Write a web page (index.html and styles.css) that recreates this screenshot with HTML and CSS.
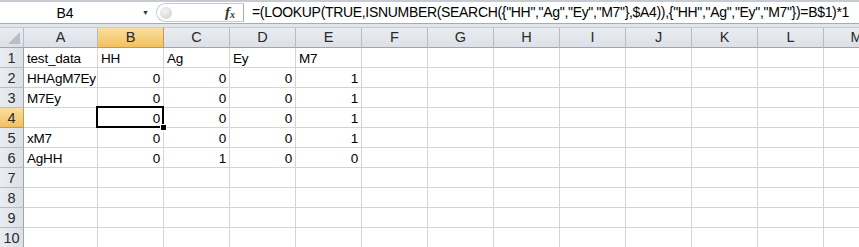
FILE: index.html
```html
<!DOCTYPE html>
<html lang="en">
<head>
  <meta charset="UTF-8" />
  <title>Book1</title>
  <link rel="stylesheet" href="styles.css">
</head>
<body>
  <div class="formula-bar">
    <div class="name-box">
      <span class="cell-ref">B4</span>
      <span class="drop">&#9660;</span>
    </div>
    <div class="fx-box">
      <span class="knob"></span>
      <span class="fx">f<sub>x</sub></span>
    </div>
    <div class="formula">=(LOOKUP(TRUE,ISNUMBER(SEARCH({"HH","Ag","Ey","M7"},$A4)),{"HH","Ag","Ey","M7"})=B$1)*1</div>
  </div>
  <div class="strip"></div>

  <div class="sheet">
    <div class="hd corner"><span class="tri"></span></div>
    <div class="hd">A</div>
    <div class="hd active">B</div>
    <div class="hd">C</div>
    <div class="hd">D</div>
    <div class="hd">E</div>
    <div class="hd">F</div>
    <div class="hd">G</div>
    <div class="hd">H</div>
    <div class="hd">I</div>
    <div class="hd">J</div>
    <div class="hd">K</div>
    <div class="hd">L</div>
    <div class="hd">M</div>

    <div class="rh">1</div>
    <div class="c">test_data</div><div class="c">HH</div><div class="c">Ag</div><div class="c">Ey</div><div class="c">M7</div>
    <div class="c"></div><div class="c"></div><div class="c"></div><div class="c"></div><div class="c"></div><div class="c"></div><div class="c"></div><div class="c"></div>

    <div class="rh">2</div>
    <div class="c">HHAgM7Ey</div><div class="c n">0</div><div class="c n">0</div><div class="c n">0</div><div class="c n">1</div>
    <div class="c"></div><div class="c"></div><div class="c"></div><div class="c"></div><div class="c"></div><div class="c"></div><div class="c"></div><div class="c"></div>

    <div class="rh">3</div>
    <div class="c">M7Ey</div><div class="c n">0</div><div class="c n">0</div><div class="c n">0</div><div class="c n">1</div>
    <div class="c"></div><div class="c"></div><div class="c"></div><div class="c"></div><div class="c"></div><div class="c"></div><div class="c"></div><div class="c"></div>

    <div class="rh active">4</div>
    <div class="c"></div><div class="c n sel">0<span class="handle"></span></div><div class="c n">0</div><div class="c n">0</div><div class="c n">1</div>
    <div class="c"></div><div class="c"></div><div class="c"></div><div class="c"></div><div class="c"></div><div class="c"></div><div class="c"></div><div class="c"></div>

    <div class="rh">5</div>
    <div class="c">xM7</div><div class="c n">0</div><div class="c n">0</div><div class="c n">0</div><div class="c n">1</div>
    <div class="c"></div><div class="c"></div><div class="c"></div><div class="c"></div><div class="c"></div><div class="c"></div><div class="c"></div><div class="c"></div>

    <div class="rh">6</div>
    <div class="c">AgHH</div><div class="c n">0</div><div class="c n">1</div><div class="c n">0</div><div class="c n">0</div>
    <div class="c"></div><div class="c"></div><div class="c"></div><div class="c"></div><div class="c"></div><div class="c"></div><div class="c"></div><div class="c"></div>

    <div class="rh">7</div>
    <div class="c"></div><div class="c"></div><div class="c"></div><div class="c"></div><div class="c"></div><div class="c"></div><div class="c"></div><div class="c"></div><div class="c"></div><div class="c"></div><div class="c"></div><div class="c"></div><div class="c"></div>

    <div class="rh">8</div>
    <div class="c"></div><div class="c"></div><div class="c"></div><div class="c"></div><div class="c"></div><div class="c"></div><div class="c"></div><div class="c"></div><div class="c"></div><div class="c"></div><div class="c"></div><div class="c"></div><div class="c"></div>

    <div class="rh">9</div>
    <div class="c"></div><div class="c"></div><div class="c"></div><div class="c"></div><div class="c"></div><div class="c"></div><div class="c"></div><div class="c"></div><div class="c"></div><div class="c"></div><div class="c"></div><div class="c"></div><div class="c"></div>

    <div class="rh">10</div>
    <div class="c"></div><div class="c"></div><div class="c"></div><div class="c"></div><div class="c"></div><div class="c"></div><div class="c"></div><div class="c"></div><div class="c"></div><div class="c"></div><div class="c"></div><div class="c"></div><div class="c"></div>
  </div>
</body>
</html>
```

FILE: styles.css
```css
body {
  margin: 0;
  width: 859px;
  height: 247px;
  overflow: hidden;
  background: white;
  font-family: "Liberation Sans", Arial, sans-serif;
  font-size: 14px;
  color: #000;
}
.formula-bar {
  display: flex;
  height: 21px;
  border-top: 2px solid #c4cbd5;
  border-bottom: 1px solid #a5acb5;
  background: white;
}
.name-box {
  width: 156px;
  display: flex;
  align-items: center;
}
.cell-ref {
  flex: 1;
  text-align: center;
  font-size: 14px;
  padding-right: 12px;
}
.drop {
  font-size: 7px;
  color: #333;
  width: 14px;
}
.fx-box {
  width: 88px;
  margin: 1px 0;
  border: 1px solid #c8ccd2;
  border-right: 1px solid #a5acb5;
  border-radius: 10px 0 0 10px;
  display: flex;
  align-items: center;
  justify-content: space-between;
  padding: 0 8px 0 3px;
  box-sizing: border-box;
}
.knob {
  width: 12px;
  height: 12px;
  border-radius: 50%;
  background: radial-gradient(circle at 40% 35%, #f4f4f4, #c9cbcd);
}
.fx {
  font-family: "Liberation Serif", serif;
  font-style: italic;
  font-weight: bold;
  font-size: 15px;
  color: #333;
}
.fx sub {
  font-size: 10px;
  vertical-align: -1px;
}
.formula {
  padding-left: 8px;
  line-height: 21px;
  white-space: nowrap;
  letter-spacing: -0.32px;
}
.strip {
  height: 3px;
  background: #e1e5ea;
}
.sheet {
  display: grid;
  grid-template-columns: 24px 74px repeat(12, 66px);
  grid-template-rows: 21px repeat(10, 20px);
}
.hd {
  background: linear-gradient(#e9ecf0, #dde1e7);
  border-right: 1px solid #b6bcc6;
  border-bottom: 1px solid #9ea5af;
  border-top: 1px solid #c9ced6;
  text-align: center;
  line-height: 19px;
  font-size: 14.5px;
  color: #2a2a2a;
  box-sizing: border-box;
}
.hd.active, .rh.active {
  background: linear-gradient(#f9df9e, #f1c15f);
  border-right-color: #c29b4c;
  border-bottom-color: #c29b4c;
}
.corner {
  position: relative;
}
.tri {
  position: absolute;
  right: 3px;
  bottom: 3px;
  width: 0;
  height: 0;
  border-left: 12px solid transparent;
  border-bottom: 12px solid #b8bec8;
}
.rh {
  background: linear-gradient(90deg, #e9ecf0, #dde1e7);
  border-right: 1px solid #9ea5af;
  border-bottom: 1px solid #b6bcc6;
  text-align: center;
  line-height: 20px;
  font-size: 14.5px;
  color: #2a2a2a;
  box-sizing: border-box;
}
.c {
  border-right: 1px solid #d4d4d4;
  border-bottom: 1px solid #d4d4d4;
  padding: 0 3px;
  line-height: 21px;
  font-size: 13.5px;
  letter-spacing: -0.2px;
  white-space: nowrap;
  box-sizing: border-box;
}
.n {
  text-align: right;
}
.sel {
  position: relative;
}
.sel::after {
  content: "";
  position: absolute;
  left: -2px;
  top: -2px;
  right: -1px;
  bottom: -1px;
  border: 2px solid #000;
}
.handle {
  position: absolute;
  right: -4px;
  bottom: -4px;
  width: 5px;
  height: 5px;
  background: #000;
  border: 1px solid white;
  z-index: 2;
}
```
